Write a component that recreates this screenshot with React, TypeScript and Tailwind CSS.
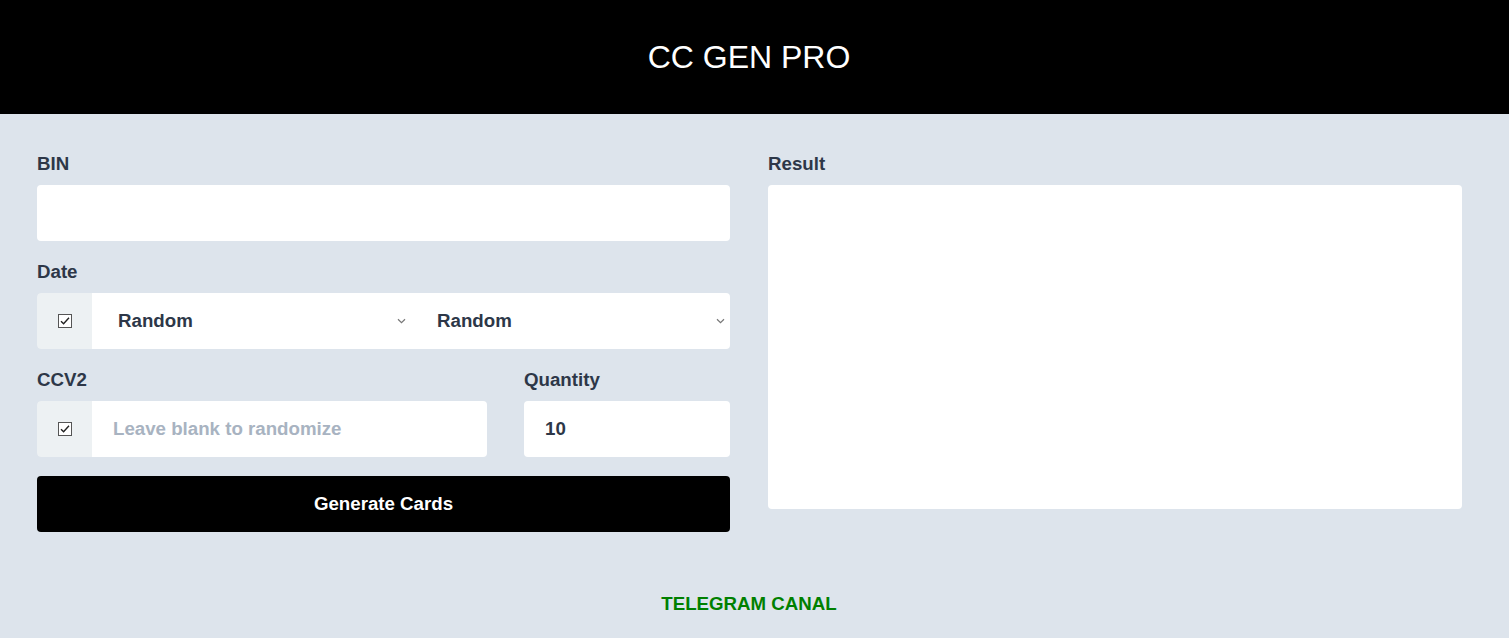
import { useState } from "react";

const font = { fontFamily: '"Liberation Sans", Arial, sans-serif' };

function CheckMark() {
  return (
    <svg width="14" height="14" viewBox="0 0 14 14" className="block">
      <rect x="0.5" y="0.5" width="13" height="13" fill="#fff" stroke="#555" />
      <path d="M3 7.2 L5.6 9.8 L11 3.8" fill="none" stroke="#222" strokeWidth="1.4" />
    </svg>
  );
}

function Chevron() {
  return (
    <svg width="9" height="6" viewBox="0 0 9 6" className="pointer-events-none absolute right-[5px] top-1/2 -translate-y-1/2">
      <path d="M1 1.2 L4.5 4.6 L8 1.2" fill="none" stroke="#777" strokeWidth="1.2" />
    </svg>
  );
}

function Addon() {
  return (
    <div className="flex w-[55px] shrink-0 items-center justify-center rounded-l-[4px] bg-[#edf1f3]">
      <CheckMark />
    </div>
  );
}

function Label({ children }: { children: string }) {
  return <div className="mb-[10px] text-[18.7px] font-bold leading-[22px] text-[#2d3748]">{children}</div>;
}

function DateSelect() {
  return (
    <div className="relative flex flex-1 items-center bg-white pl-[26px] text-[18.7px] font-bold text-[#2d3748]">
      Random
      <Chevron />
    </div>
  );
}

export default function App() {
  const [bin, setBin] = useState("");
  const [qty, setQty] = useState("10");

  return (
    <div className="min-h-[638px] bg-[#dde4ec]" style={font}>
      <header className="flex h-[114px] items-center justify-center bg-black pr-[11px]">
        <h1 className="text-[32px] font-normal text-white">CC GEN PRO</h1>
      </header>

      <main className="flex gap-[38px] pl-[37px] pt-[39px]">
        <div className="w-[693px]">
          <Label>BIN</Label>
          <div className="flex h-[56px] items-center rounded-[4px] bg-white pl-[21px]">
            <input
              autoFocus
              value={bin}
              onChange={(e) => setBin(e.target.value)}
              className="w-full bg-transparent text-[18.7px] font-bold text-[#2d3748] caret-[#2d3748] outline-none"
            />
          </div>

          <div className="mt-[20px]">
            <Label>Date</Label>
            <div className="flex h-[56px] overflow-hidden rounded-[4px]">
              <Addon />
              <DateSelect />
              <DateSelect />
            </div>
          </div>

          <div className="mt-[20px] flex gap-[37px]">
            <div className="w-[450px]">
              <Label>CCV2</Label>
              <div className="flex h-[56px] overflow-hidden rounded-[4px]">
                <Addon />
                <div className="flex flex-1 items-center bg-white pl-[21px] text-[18.7px] font-bold text-[#a8b3c1]">
                  Leave blank to randomize
                </div>
              </div>
            </div>
            <div className="flex-1">
              <Label>Quantity</Label>
              <div className="flex h-[56px] items-center rounded-[4px] bg-white pl-[21px]">
                <input
                  value={qty}
                  onChange={(e) => setQty(e.target.value)}
                  className="w-full bg-transparent text-[18.7px] font-bold text-[#2d3748] outline-none"
                />
              </div>
            </div>
          </div>

          <button className="mt-[19px] flex h-[56px] w-full items-center justify-center rounded-[4px] bg-black text-[18.7px] font-bold text-white">
            Generate Cards
          </button>
        </div>

        <div className="w-[694px]">
          <Label>Result</Label>
          <div className="h-[324px] rounded-[4px] bg-white" />
        </div>
      </main>

      <footer className="pr-[11px] pt-[58px] text-center">
        <a className="text-[18.7px] font-bold text-[#008000]">TELEGRAM CANAL</a>
      </footer>
    </div>
  );
}
